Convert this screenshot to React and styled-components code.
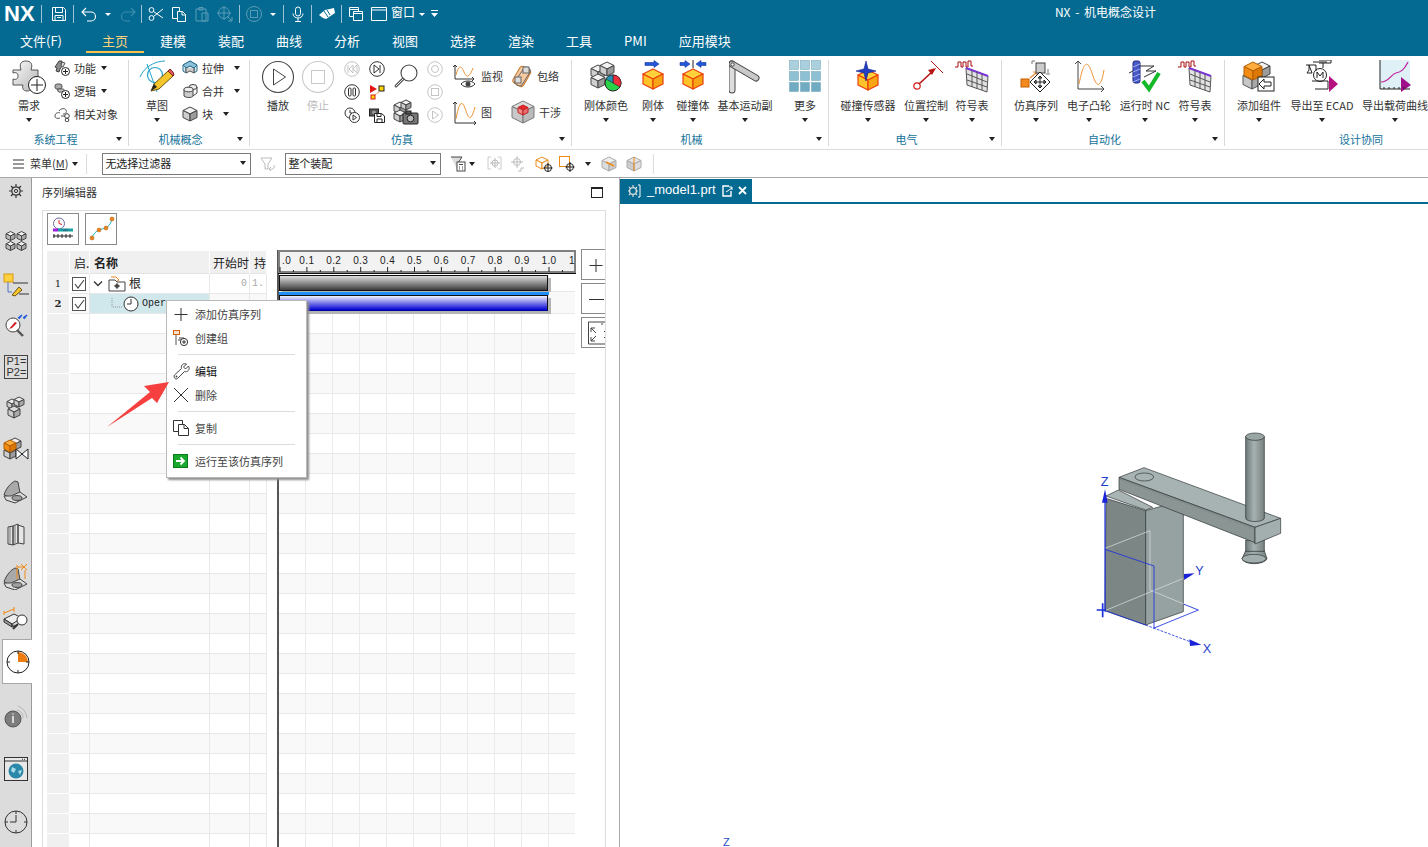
import React from 'react';
import styled, { createGlobalStyle } from 'styled-components';

const CN = `"Noto Sans CJK SC", "Liberation Sans", sans-serif`;

const GlobalStyle = createGlobalStyle`
  html, body { margin: 0; padding: 0; background: #fff; }
  body { font-family: ${CN}; font-size: 11px; color: #333; }
  * { box-sizing: border-box; }
  svg { display: block; flex: none; }
`;

const Page = styled.div`
  position: relative;
  width: 1428px;
  height: 847px;
  overflow: hidden;
  display: flex;
  flex-direction: column;
`;

/* ---------- header ---------- */
const Header = styled.div`
  height: 56px;
  flex: none;
  background: #046a92;
  color: #fff;
`;
const QuickBar = styled.div`
  height: 28px;
  display: flex;
  align-items: center;
  padding-left: 4px;
`;
const Logo = styled.span`
  font: bold 22px/28px "Liberation Sans", sans-serif;
  letter-spacing: 0;
  width: 32px;
`;
const QSep = styled.i`
  width: 1px;
  height: 18px;
  background: #9cc3d3;
  margin: 0 ${p => p.$r ?? 7}px 0 ${p => p.$l ?? 5}px;
`;
const QSlot = styled.span`
  display: flex;
  margin-left: ${p => p.$ml ?? 0}px;
`;
const QText = styled.span`
  font-size: 12px;
  line-height: 16px;
  margin: -4px 0 0 4px;
`;
const WhiteCaret = styled.i`
  width: 0;
  height: 0;
  border: 3px solid transparent;
  border-top: 3px solid #fff;
  border-bottom: 0;
  margin-left: ${p => p.$ml ?? 0}px;
`;
const AppTitle = styled.span`
  margin: -4px 272px 0 auto;
  font-size: 12px;
  line-height: 16px;
  word-spacing: 2px;
`;
const TabBar = styled.div`
  height: 28px;
  display: flex;
  padding-left: 4px;
`;
const MenuTab = styled.div`
  padding: 0 16px;
  height: 25px;
  line-height: 25px;
  font-size: 13px;
  color: ${p => (p.$on ? '#ffd27a' : '#fff')};
  border-bottom: ${p => (p.$on ? '2px solid #f7c14c' : '0')};
  margin-right: ${p => p.$mr ?? 0}px;
`;

/* ---------- ribbon ---------- */
const Ribbon = styled.div`
  height: 94px;
  flex: none;
  display: flex;
  padding-top: 4px;
  border-bottom: 1px solid #dcdcdc;
  background: #fff;
`;
const Group = styled.div`
  position: relative;
  flex: none;
  width: ${p => p.$w}px;
  height: 86px;
  display: flex;
  flex-direction: column;
  border-right: ${p => (p.$last ? '0' : '1px solid #d9d9d9')};
`;
const GroupBody = styled.div`
  height: 72px;
  display: flex;
  padding-left: ${p => p.$pl}px;
`;
const GroupFooter = styled.div`
  height: 14px;
  line-height: 14px;
  text-align: center;
  color: #14729a;
  padding-right: ${p => p.$pr ?? 17}px;
`;
const Caret = styled.i`
  display: block;
  width: 0;
  height: 0;
  border: 3.5px solid transparent;
  border-top: 4px solid #222;
  border-bottom: 0;
  margin-left: ${p => p.$ml ?? 0}px;
`;
const CornerCaret = styled(Caret)`
  position: absolute;
  right: 6px;
  bottom: 5px;
`;
const BigButton = styled.div`
  flex: none;
  width: ${p => p.$w}px;
  display: flex;
  flex-direction: column;
  align-items: center;
`;
const BigIcon = styled.div`
  height: 36px;
  display: flex;
  align-items: flex-start;
  justify-content: center;
`;
const BigLabel = styled.div`
  height: 16px;
  line-height: 16px;
  margin-top: 1px;
  white-space: nowrap;
  color: ${p => (p.$dim ? '#bbb' : '#333')};
`;
const BigCaret = styled(Caret)`
  margin-top: 5px;
`;
const ToolCol = styled.div`
  flex: none;
  display: flex;
  flex-direction: column;
  margin: ${p => p.$mt ?? -2}px 0 0 ${p => p.$ml ?? 0}px;
  width: ${p => (p.$w ? `${p.$w}px` : 'auto')};
`;
const SmallTool = styled.div`
  height: 23px;
  display: flex;
  align-items: center;
  justify-content: ${p => (p.$center ? 'center' : 'flex-start')};
  white-space: nowrap;
`;
const ToolText = styled.span`
  margin-left: 4px;
`;
const TallTool = styled.div`
  height: 36px;
  display: flex;
  align-items: center;
  justify-content: ${p => (p.$center ? 'center' : 'flex-start')};
  white-space: nowrap;
`;

/* ---------- selection bar ---------- */
const SelectionBar = styled.div`
  height: 28px;
  flex: none;
  display: flex;
  align-items: center;
  background: #fff;
  border-bottom: 1px solid #a9a9a9;
  padding-left: 13px;
`;
const SelSlot = styled.span`
  display: flex;
  margin-left: ${p => p.$ml ?? 0}px;
`;
const MenuLabel = styled.span`
  margin: -2px 0 0 6px;
  font-size: 11px;
  u { text-underline-offset: 1px; }
`;
const SelSep = styled.i`
  width: 1px;
  height: 20px;
  background: #ddd;
  margin-left: ${p => p.$ml}px;
`;
const Dropdown = styled.div`
  width: ${p => p.$w}px;
  height: 22px;
  margin-left: ${p => p.$ml}px;
  border: 1px solid #7a7a7a;
  display: flex;
  align-items: center;
  justify-content: space-between;
  padding: 0 4px 2px 2px;
  font-size: 11px;
  color: #222;
`;

/* ---------- main area ---------- */
const Main = styled.div`
  flex: 1;
  min-height: 0;
  display: flex;
`;
const Rail = styled.div`
  width: 32px;
  flex: none;
  background: #dcdcdc;
  border-right: 1px solid #9a9a9a;
  display: flex;
  flex-direction: column;
  align-items: stretch;
`;
const RailItem = styled.div`
  height: 26px;
  flex: none;
  margin-top: ${p => p.$mt}px;
  display: flex;
  align-items: center;
  justify-content: center;
`;
const RailActive = styled.div`
  height: 45px;
  flex: none;
  margin: ${p => p.$mt}px -1px 0 2px;
  background: #fff;
  border: 1px solid #a8a8a8;
  border-right: 0;
  display: flex;
  align-items: center;
  justify-content: center;
`;
const Panel = styled.div`
  width: 588px;
  flex: none;
  border-right: 1px solid #a9a9a9;
  padding-left: 10px;
  display: flex;
  flex-direction: column;
  background: #fff;
`;
const PanelHead = styled.div`
  height: 32px;
  flex: none;
  display: flex;
  align-items: center;
  justify-content: space-between;
  padding: 0 16px 4px 0;
  font-size: 11px;
  color: #333;
`;
const MaxBtn = styled.i`
  display: block;
  width: 12px;
  height: 11px;
  border: 1px solid #222;
  border-top-width: 2px;
`;
const PanelBox = styled.div`
  width: 564px;
  flex: 1;
  min-height: 0;
  border: 1px solid #dedede;
  border-bottom: 0;
  padding-left: 4px;
  overflow: hidden;
`;
const SeqTools = styled.div`
  height: 39px;
  display: flex;
  gap: 6px;
  padding-top: 2px;
`;
const SeqTool = styled.div`
  width: 32px;
  height: 32px;
  border: 1px solid #8a8a8a;
  display: flex;
  align-items: center;
  justify-content: center;
`;
const Sheet = styled.div`
  display: flex;
`;
const Table = styled.div`
  width: 220px;
  flex: none;
  margin-top: 1px;
`;
const HeadRow = styled.div`
  height: 23px;
  display: grid;
  grid-template-columns: 23px 20px 120px 40px 17px;
  background: #f0f0f0;
  border-bottom: 1px solid #e4e4e4;
`;
const HeadCell = styled.div`
  border-right: 1px solid #fff;
  line-height: 24px;
  font-size: 12px;
  padding-left: ${p => p.$pl ?? 3}px;
  font-weight: ${p => (p.$bold ? 700 : 400)};
  color: #222;
  white-space: nowrap;
`;
const Row = styled.div`
  height: 20px;
  display: grid;
  grid-template-columns: 23px 20px 120px 40px 17px;
  background: ${p => (p.$odd ? '#f9f9f9' : '#fff')};
`;
const NumCell = styled.div`
  background: #f0f0f0;
  border-right: 1px solid #fff;
  border-bottom: 1px solid #fff;
  text-align: center;
  font: ${p => (p.$bold ? 'bold' : 'normal')} 10px/19px "DejaVu Serif", serif;
  color: #222;
`;
const Cell = styled.div`
  border-right: 1px solid #e8e8e8;
  border-bottom: 1px solid #e8e8e8;
  display: flex;
  align-items: center;
  justify-content: ${p => (p.$end ? 'flex-end' : 'flex-start')};
  padding: 0 ${p => (p.$end ? 2 : 0)}px 0 0;
  color: #aaa;
  font: 10px "Liberation Mono", monospace;
  overflow: hidden;
  background: ${p => (p.$sel ? '#d0e7ec' : 'transparent')};
`;
const CheckBox = styled.span`
  display: flex;
  align-items: center;
  justify-content: center;
  width: 14px;
  height: 14px;
  margin-left: 2px;
  border: 1px solid #555;
  background: #fff;
`;
const TreeLabel = styled.span`
  font: ${p => (p.$mono ? '10px "Liberation Mono", monospace' : `12px ${CN}`)};
  color: #222;
  margin: ${p => (p.$mono ? 0 : -2)}px 0 0 3px;
  white-space: nowrap;
`;
const TreeIndent = styled.span`
  display: flex;
  align-items: center;
  margin-left: ${p => p.$ml}px;
`;
const Timeline = styled.div`
  width: 298px;
  flex: none;
  margin-left: 10px;
  border-left: 2px solid #555;
`;
const Ruler = styled.div`
  height: 24px;
  margin-left: -1px;
  width: 298px;
`;
const Lane = styled.div`
  height: ${p => p.$h ?? 20}px;
  width: 296px;
  background-color: ${p => (p.$odd ? '#f9f9f9' : '#fff')};
  background-image:
    linear-gradient(to top, #e8e8e8 1px, transparent 1px),
    repeating-linear-gradient(to right, transparent 0, transparent 26.2px, #ebebeb 26.2px, #ebebeb 27px);
  padding-top: ${p => p.$pt ?? 0}px;
`;
const Stripe = styled.div`
  width: 270px;
  height: 3px;
  background: #1e90f8;
`;
const Bar = styled.div`
  width: 269px;
  height: 16px;
  border: 1px solid #111;
  border-bottom-color: ${p => (p.$blue ? '#0000a0' : '#111')};
  background: ${p => (p.$blue
    ? 'linear-gradient(#f3f3ff, #0000d2)'
    : 'linear-gradient(#dedede, #3c3c3c)')};
  box-shadow: 3px 3px 0 #b4b4b4;
`;
const SideButtons = styled.div`
  margin-left: 6px;
  display: flex;
  flex-direction: column;
  gap: 3px;
  margin-top: -1px;
`;
const SideButton = styled.div`
  width: 32px;
  height: 31px;
  border: 1px solid #8a8a8a;
  display: flex;
  align-items: center;
  padding-left: 6px;
`;

/* ---------- viewport ---------- */
const Viewport = styled.div`
  position: relative;
  flex: 1;
  background: #fff;
  padding-top: 1px;
`;
const DocTabs = styled.div`
  height: 25px;
  border-bottom: 2px solid #046a92;
`;
const DocTab = styled.div`
  width: 132px;
  height: 23px;
  background: #046a92;
  color: #fff;
  display: flex;
  align-items: center;
  padding-left: 7px;
  font: 13px "Liberation Sans", sans-serif;
`;
const DocName = styled.span`
  margin: -2px 6px 0 6px;
`;
const ModelWrap = styled.div`
  position: absolute;
  left: 460px;
  top: 242px;
`;
const TriadZ = styled.span`
  position: absolute;
  left: 103px;
  bottom: -1px;
  font: 11px "Liberation Sans", sans-serif;
  color: #1d4fc4;
`;

/* ---------- context menu ---------- */
const ContextMenu = styled.div`
  position: absolute;
  left: 166px;
  top: 300px;
  width: 141px;
  height: 178px;
  background: #fff;
  border: 1px solid #b9b9b9;
  box-shadow: 2px 2px 2px #8f8f8f;
  padding: 1px 0 0 6px;
`;
const MenuItem = styled.div`
  height: 24px;
  display: flex;
  align-items: center;
  font-size: 11px;
  color: ${p => (p.$strong ? '#111' : '#444')};
`;
const MenuIcon = styled.span`
  width: 22px;
  display: flex;
  justify-content: flex-start;
`;
const MenuSep = styled.div`
  height: 1px;
  width: 117px;
  background: #dcdcdc;
  margin: 4px 0 4px 5px;
`;
const ArrowMark = styled.svg`
  position: absolute;
  left: 100px;
  top: 375px;
`;

/* ---------- drawings ---------- */
const Ic = ({ w = 16, h = 16, vb, children }) => (
  <svg width={w} height={h} viewBox={vb || `0 0 ${w} ${h}`} fill="none">{children}</svg>
);

const Cube = ({ x, y, s = 10, top = '#f2f2f2', left = '#cfcfcf', right = '#9c9c9c', stroke = '#444', sw = 1 }) => (
  <g stroke={stroke} strokeWidth={sw} strokeLinejoin="round">
    <polygon points={`${x},${y} ${x + s},${y - s / 2} ${x},${y - s} ${x - s},${y - s / 2}`} fill={top} />
    <polygon points={`${x},${y} ${x - s},${y - s / 2} ${x - s},${y + s / 2} ${x},${y + s}`} fill={left} />
    <polygon points={`${x},${y} ${x + s},${y - s / 2} ${x + s},${y + s / 2} ${x},${y + s}`} fill={right} />
  </g>
);
const OrangeCube = ({ x, y, s = 10 }) => (
  <Cube x={x} y={y} s={s} top="#ffd23c" left="#ffc22a" right="#f8a515" stroke="#e8400a" sw={1.2} />
);
const PlusBadge = ({ x, y, r = 5 }) => (
  <g>
    <circle cx={x} cy={y} r={r} fill="#fff" stroke="#222" />
    <path d={`M${x - r + 1.5} ${y}h${2 * r - 3}M${x} ${y - r + 1.5}v${2 * r - 3}`} stroke="#222" />
  </g>
);

const W = '#fff';
const QaSave = () => <Ic><path d="M1.5 1.5h11l2 2v11h-13z M4.5 1.5v5h7v-5 M4 14.5v-5h8v5 M6 11.5h4" stroke={W} /></Ic>;
const QaUndo = () => <Ic w={18}><path d="M6 2L2 6l4 4M2 6h9a4.5 4.5 0 0 1 0 9H7" stroke={W} strokeWidth="1.1" /></Ic>;
const QaRedo = () => <Ic w={18}><path d="M12 2l4 4-4 4M16 6H7a4.5 4.5 0 0 0 0 9h4" stroke="#3d8cab" strokeWidth="1.1" /></Ic>;
const QaCut = () => <Ic><circle cx="3.5" cy="4" r="2.4" stroke={W} /><circle cx="3.5" cy="12" r="2.4" stroke={W} /><path d="M5.5 5.5L15 12M5.5 10.5L15 3" stroke={W} /></Ic>;
const QaCopy = () => <Ic><path d="M1.5 1.5h7v11h-7z" stroke={W} fill="#046a92" /><path d="M6.5 5.5h5l3 3v7h-8z M11 5.5v3.5h3.5" stroke={W} fill="#046a92" /></Ic>;
const QaPaste = () => <Ic><path d="M2 3h10v12H2zM5 1.5h4V4H5z M8 7h6v8H8z" stroke="#5a9cb6" /></Ic>;
const QaMove = () => <Ic><circle cx="7" cy="7" r="5.5" stroke="#5a9cb6" /><path d="M7 0v14M0 7h14M10 10l5 5M15 11v4h-4" stroke="#5a9cb6" /></Ic>;
const QaStop = () => <Ic><circle cx="8" cy="8" r="7.5" stroke="#5a9cb6" /><rect x="4.5" y="4.5" width="7" height="7" stroke="#5a9cb6" /></Ic>;
const QaMic = () => <Ic w={14}><rect x="4.5" y="1" width="5" height="9" rx="2.5" stroke={W} /><path d="M2 7.5c0 6 10 6 10 0M7 12v3M4 15.5h6" stroke={W} /></Ic>;
const QaFlag = () => <Ic w={18}><path d="M1 9l6-5 9-2 1 5-9 6-3-1z" fill={W} /><path d="M6 5l4 6M9 4l3 5" stroke="#046a92" /></Ic>;
const QaWins = () => <Ic><path d="M1.5 1.5h9v9h-9z" stroke={W} /><path d="M5.5 5.5h9v9h-9z" stroke={W} fill="#046a92" /><path d="M1.5 3.5h9M5.5 7.5h9" stroke={W} /></Ic>;
const QaWin = () => <Ic><path d="M.5 1.5h15v13H.5zM.5 4h15" stroke={W} /></Ic>;
const QaTop = () => <Ic w={7} h={8}><path d="M0 .5h7" stroke={W} /><path d="M0 3h7L3.5 7z" fill={W} /></Ic>;

const IconPuzzle = () => (
  <Ic w={36} h={36}>
    <defs><linearGradient id="pz" x1="0" y1="0" x2="1" y2="1"><stop offset="0" stopColor="#fafafa" /><stop offset="1" stopColor="#b5b5b5" /></linearGradient></defs>
    <path d="M2 10h8c-2-6 0-9 5-9s7 3 5 9h7v7c-3-1-5 0-5 3s2 4 5 3v2H20c1 3 0 6-4 6s-5-3-4-6H2v-6c3 1 5 0 5-3s-2-4-5-3z" fill="url(#pz)" stroke="#555" />
    <circle cx="26" cy="25" r="8.5" fill="#fff" stroke="#222" />
    <path d="M20 25h12M26 19v12" stroke="#222" />
  </Ic>
);
const IconFunc = () => (
  <Ic><path d="M5 1l3 0-1 3 2 1-3 4-1 3-3-1 1-3-2-1z" fill="#8c8c8c" stroke="#444" /><path d="M8 2l3 1-2 4-2-1z" fill="#ddd" stroke="#555" /><PlusBadge x={11.5} y={11.5} r={4} /></Ic>
);
const IconLogic = () => (
  <Ic><rect x="1" y="1" width="7" height="5" rx="2" fill="#aaa" stroke="#555" /><path d="M3 6l2 3 2-1" stroke="#555" /><rect x="4" y="6" width="6" height="3" rx="1" fill="#ccc" stroke="#555" /><PlusBadge x={11.5} y={11.5} r={4} /></Ic>
);
const IconRelated = () => (
  <Ic><path d="M1 10c0-3 3-4 5-3M5 5c2-3 6-3 7-1s0 4-3 4M6 12c-3 1-5 0-5-2" stroke="#555" /><path d="M7 10h4" stroke="#555" /><circle cx="13" cy="10" r="2.3" stroke="#444" /><circle cx="13" cy="14" r="1.8" stroke="#444" /></Ic>
);
const IconSketch = () => (
  <Ic w={36} h={34}>
    <path d="M1 17C5 7 16 1 26 1M8 4l10 28" stroke="#23a3c9" />
    <circle cx="16" cy="15" r="7.5" stroke="#23a3c9" strokeWidth="1.2" />
    <path d="M12 31l3-7 14-13 5 5-14 13z" fill="#f4c62c" stroke="#6b5412" />
    <path d="M29 11l2-2 3 3 1 3-1 1z" fill="#e95a5a" stroke="#7a2222" />
    <path d="M12 31l3-7 3 3z" fill="#222" />
  </Ic>
);
const IconExtrude = () => (
  <Ic><path d="M1 5l7-4 7 4v6l-3 2V8L8 6 4 8v5l-3-2z" fill="#d6e6ee" stroke="#2b6f8b" /><path d="M1 5l7-4 7 4-3 3-4-2-4 2z" fill="#8cc3db" stroke="#2b6f8b" /><path d="M4 8v5l4-2 4 2V8" fill="#ccc" stroke="#555" /></Ic>
);
const IconMerge = () => (
  <Ic w={16} h={16}><ellipse cx="11" cy="4" rx="4" ry="2.5" fill="#eee" stroke="#444" /><path d="M7 4v4M15 4v6l-4 3" stroke="#444" /><path d="M2 6c2-2 8-2 9 0v7c-1 2-7 2-9 0z" fill="#ccc" stroke="#444" /><ellipse cx="6.5" cy="6.5" rx="4.5" ry="2.3" fill="#eee" stroke="#444" /></Ic>
);
const IconBlock = () => <Ic><Cube x={8} y={8} s={7} /></Ic>;
const IconPlay = () => <Ic w={34} h={34}><circle cx="17" cy="17" r="15.5" stroke="#444" strokeWidth="1.1" /><path d="M12.5 9l12 8-12 8z" stroke="#444" /></Ic>;
const IconStop = () => <Ic w={34} h={34}><circle cx="17" cy="17" r="15.5" stroke="#c9c9c9" strokeWidth="1.1" /><rect x="10.5" y="10.5" width="13" height="13" stroke="#c9c9c9" /></Ic>;
const Round = ({ c = '#333', children }) => <Ic><circle cx="8" cy="8" r="7.3" stroke={c} fill="#fff" />{children}</Ic>;
const IconRewind = () => <Round c="#c4c4c4"><path d="M4 4v8M9 4L5 8l4 4zM13 4L9 8l4 4z" stroke="#c4c4c4" /></Round>;
const IconPause = () => <Round><rect x="4.5" y="4" width="2.5" height="8" rx="1" stroke="#333" /><rect x="9" y="4" width="2.5" height="8" rx="1" stroke="#333" /></Round>;
const IconStep = () => <Round><path d="M5 4l5 4-5 4zM11 4v8" stroke="#333" /></Round>;
const IconClocks = () => (
  <Ic><circle cx="6" cy="6" r="5" fill="#fff" stroke="#333" /><path d="M6 3v3h2" stroke="#333" /><circle cx="10.5" cy="10.5" r="5" fill="#fff" stroke="#333" /><path d="M9 8l3.5 2.5L9 13z" stroke="#333" /></Ic>
);
const IconSnap = () => (
  <Ic><path d="M1 1l7 4-7 4z" fill="#e01616" /><rect x="10" y="2" width="5" height="5" fill="#ffd500" stroke="#222" /><rect x="2" y="11" width="4" height="4" fill="#ffd500" stroke="#d51d1d" /><path d="M6 11l5-4" stroke="#e8782a" strokeDasharray="2 1" /></Ic>
);
const IconSaveCam = () => (
  <Ic><rect x="0.5" y="2" width="9" height="7" fill="#555" stroke="#222" /><circle cx="5" cy="5.5" r="2" fill="#999" /><path d="M5.5 6.5h7l3 2.5v6.5h-10z" fill="#fff" stroke="#222" /><path d="M8 6.5v3h4v-3M8 15v-3h5v3" stroke="#222" /></Ic>
);
const IconSearch = () => (
  <Ic w={26} h={26}><circle cx="16" cy="10" r="8" stroke="#444" strokeWidth="1.1" /><path d="M10 16l-7 7" stroke="#555" strokeWidth="3" strokeLinecap="round" /><path d="M10 16l-7 7" stroke="#eee" strokeLinecap="round" /></Ic>
);
const IconCamBoxes = () => (
  <Ic w={26} h={26}><Cube x={7} y={9} s={6} /><Cube x={7} y={17} s={6} /><Cube x={13} y={6} s={5} /><rect x="10" y="14" width="15" height="11" rx="1" fill="#777" stroke="#222" /><rect x="13" y="12" width="5" height="3" fill="#555" stroke="#222" /><circle cx="17.5" cy="19.5" r="3.4" fill="#bbb" stroke="#222" /></Ic>
);
const IconCircleDot = () => <Round c="#c4c4c4"><circle cx="8" cy="8" r="3.5" stroke="#c4c4c4" /></Round>;
const IconCircleBox = () => <Round c="#c4c4c4"><rect x="4.5" y="4.5" width="7" height="7" stroke="#c4c4c4" /></Round>;
const IconCirclePlay = () => <Round c="#c4c4c4"><path d="M5.5 4l6 4-6 4z" stroke="#c4c4c4" /></Round>;
const Axes = ({ y = 24, h = 24 }) => (
  <path d={`M3 ${y - h + 1}V${y}H24M1 ${y - h + 3}l2-2 2 2M22 ${y - 2}l2 2-2 2`} stroke="#333" />
);
const IconMonitor = () => (
  <Ic w={25} h={24}><path d="M3 1v14h19M1 3l2-2 2 2M20 13l2 2-2 2" stroke="#333" /><path d="M4 11c3-12 6-8 8-3s5 7 9-4" stroke="#ee9130" /><path d="M9 20c3-4 11-4 14 0-3 4-11 4-14 0z" fill="#fff" stroke="#333" /><circle cx="16" cy="20" r="2.5" fill="#444" /></Ic>
);
const IconGraph = () => <Ic w={25} h={25}><Axes y={23} h={22} /><path d="M4 19c4-22 7-17 10-8s5 10 9-4" stroke="#ee9130" /></Ic>;
const IconEnvelope = () => (
  <Ic w={22} h={24}><rect x="5" y="3" width="12" height="19" rx="3" transform="rotate(30 11 12)" fill="#f7c9a0" stroke="#c8752c" /><path d="M14 3c3 0 6 1 5 5l-8 13c-3 2-8 0-7-4z" stroke="#666" /><rect x="4" y="13" width="6" height="6" fill="#ddd" stroke="#666" /><rect x="12" y="3" width="6" height="6" fill="#ddd" stroke="#666" /></Ic>
);
const IconInterfere = () => (
  <Ic w={24} h={24}><Cube x={12} y={12} s={11} top="#ddd" left="#c8c8c8" right="#bbb" stroke="#777" /><Cube x={12} y={10} s={5} top="#e8262c" left="#ee8c8c" right="#e56e6e" stroke="#c02020" /></Ic>
);
const IconRigidColor = () => (
  <Ic w={34} h={32}>
    <Cube x={9} y={12} s={7} /><Cube x={9} y={21} s={7} /><Cube x={18} y={9} s={7} />
    <circle cx="24" cy="23" r="8" fill="#2ad24a" stroke="#222" />
    <path d="M24 23V15a8 8 0 0 1 7 12z" fill="#ee2f3f" stroke="#222" strokeWidth=".6" />
    <path d="M24 23l-7-4a8 8 0 0 1 7-4z" fill="#2490b4" stroke="#222" strokeWidth=".6" />
  </Ic>
);
const BlueArrow = ({ x, y, l = 14, dir = 1 }) => (
  <g fill="#2158d8" stroke="#1236a0" strokeWidth=".6">
    <path d={dir > 0
      ? `M${x} ${y - 1.5}h${l - 4}v-2l5 3.5-5 3.5v-2h-${l - 4}z`
      : `M${x} ${y - 1.5}h-${l - 4}v-2l-5 3.5 5 3.5v-2h${l - 4}z`} />
  </g>
);
const IconRigid = () => <Ic w={24} h={34}><BlueArrow x={4} y={4} l={13} /><OrangeCube x={12} y={19} s={10} /></Ic>;
const IconCollide = () => (
  <Ic w={28} h={34}><BlueArrow x={1} y={4} l={9} /><BlueArrow x={27} y={4} l={9} dir={-1} /><path d="M14 0v8" stroke="#222" /><OrangeCube x={14} y={19} s={10} /></Ic>
);
const IconJoint = () => (
  <Ic w={32} h={34}>
    <path d="M3 4v26" stroke="#444" strokeWidth="7" strokeLinecap="round" />
    <path d="M3 4v26" stroke="#ddd" strokeWidth="5" strokeLinecap="round" />
    <path d="M3 4l24 14" stroke="#444" strokeWidth="7" strokeLinecap="round" />
    <path d="M3 4l24 14" stroke="#c9c9c9" strokeWidth="5" strokeLinecap="round" />
    <circle cx="3.5" cy="4.5" r="1.7" fill="#eee" stroke="#444" />
  </Ic>
);
const IconMore = () => (
  <Ic w={32} h={32}>
    {[0, 11, 22].map(y => [0, 11, 22].map(x => (
      <rect key={`${x}-${y}`} x={x + .5} y={y + .5} width={9} height={9} fill={y === 0 ? '#a9d0dc' : y === 11 ? '#8cc0d2' : '#71abc2'} stroke="#6aa2b8" strokeWidth=".5" />
    )))}
  </Ic>
);
const IconSensor = () => (
  <Ic w={26} h={34}><OrangeCube x={13} y={20} s={10} /><path d="M11 1l2 8 8 2-8 2-2 8-2-8-8-2 8-2z" fill="#1f3fc4" stroke="#10208a" strokeWidth=".6" /></Ic>
);
const IconPosition = () => (
  <Ic w={34} h={34}><circle cx="8" cy="26" r="3.2" stroke="#d11919" strokeWidth="1.2" /><path d="M10 24L24 11" stroke="#b81414" strokeWidth="1.6" /><path d="M27 8l-8 2 4 5z" fill="#b81414" /><path d="M22 1l12 12" stroke="#b81414" /></Ic>
);
const IconSymbols = () => (
  <Ic w={34} h={34}>
    <path d="M0 7h3V2h3v5h2V2h3v5h2V1h3v5h2" stroke="#a80d0d" strokeWidth="1" />
    <path d="M11 8l22 8-1 16-20-7z" fill="#e2e2e2" stroke="#555" />
    <path d="M11 8l22 8" stroke="#7a35d6" strokeWidth="2" />
    <path d="M12 14l20 8M12 20l20 7M17 10v17M22 12v17M27 14v16" stroke="#555" />
  </Ic>
);
const IconSimSeq = () => (
  <Ic w={32} h={34}>
    <rect x="1" y="19" width="8" height="8" fill="#f28a1f" stroke="#c45e00" />
    <path d="M10 18l6-5M13 12h4v4" stroke="#ef8a2e" strokeWidth="1.2" />
    <rect x="16" y="3" width="9" height="10" fill="#ccc" stroke="#444" />
    <path d="M12 1h3M12 1v3M26 14l4 0M28 9v4" stroke="#777" />
    <path d="M20 12l10 10-10 10-10-10z" fill="#fff" stroke="#222" />
    <path d="M20 16v12M14 22h12M20 16l-2 2h4zM20 28l-2-2h4zM14 22l2-2v4zM26 22l-2-2v4z" stroke="#222" />
  </Ic>
);
const IconCam = () => (
  <Ic w={32} h={32}><path d="M5 1v28h26M2 4l3-3 3 3M28 26l3 3-3 3" stroke="#444" /><path d="M6 24c6-30 10-20 14-8s8 12 11-6" stroke="#ee9130" /></Ic>
);
const IconRunNc = () => (
  <Ic w={32} h={34}>
    <rect x="4" y="1" width="7" height="22" rx="2" fill="#4a58c8" stroke="#1e2a80" />
    <path d="M4 7l7-3M4 12l7-3M4 17l7-3M4 22l7-3" stroke="#9fb0f0" />
    <path d="M11 6h14l-8 5h10L15 17M0 13l4-2" stroke="#333" />
    <path d="M14 21l6 8L30 13" stroke="#14b828" strokeWidth="4" strokeLinejoin="miter" />
  </Ic>
);
const IconAddComp = () => (
  <Ic w={34} h={32}>
    <Cube x={20} y={10} s={8} /><Cube x={10} y={20} s={9} top="#d9d9d9" left="#c7c7c7" right="#a8a8a8" stroke="#555" />
    <Cube x={11} y={11} s={9} top="#ffad3c" left="#f28c14" right="#dd7708" stroke="#b35f00" />
    <rect x="16" y="17" width="16" height="14" fill="#fff" stroke="#222" />
    <path d="M29 22h-7v-3l-5 5 5 5v-3h7z" fill="#fff" stroke="#222" />
  </Ic>
);
const IconEcad = () => (
  <Ic w={34} h={32}>
    <path d="M8 2h14M14 0h12v3H14M1 5h10v6M4 5v5l-2 3h5zM18 3v5" stroke="#222" />
    <circle cx="15" cy="15" r="6.5" stroke="#222" /><path d="M12 18v-6l3 4 3-4v6" stroke="#222" />
    <path d="M7 21h16v8H10" stroke="#222" />
    <path d="M24 16l9 8-9 8z" fill="#b4107e" />
  </Ic>
);
const IconLoad = () => (
  <Ic w={32} h={32}>
    <rect width="30" height="29" x="1" fill="#dff0f7" />
    <path d="M1 0v29h30" stroke="#222" />
    <path d="M2 22c8 0 10-8 15-9s8-3 12-11" stroke="#c01d9a" strokeWidth="1.2" />
    <path d="M22 17l10 8-10 7z" fill="#a00f8a" />
    <path d="M5 27v2M10 27v2M15 27v2M20 27v2M25 27v2" stroke="#222" />
  </Ic>
);

const SelFilter = ({ c = '#bbb' }) => <Ic><path d="M1 2h11L8 8v5H5V8z" stroke={c} /><path d="M9 13c4 1 6-1 5-4M9 13l2-2M9 13l2 2" stroke={c} /></Ic>;
const SelAsm = () => <Ic><path d="M1 1h11L8 7v8" stroke="#444" fill="#ddd" /><rect x="7" y="6" width="8" height="9" fill="#fff" stroke="#444" /><path d="M9 8.5h4M9 11h1M12 11h1M9 13h1M12 13h1" stroke="#444" /></Ic>;
const SelTarget = () => <Ic><path d="M4 1H1v12h3M11 1h3v12h-3" stroke="#ccc" /><circle cx="8" cy="7" r="3" stroke="#bbb" /><path d="M8 2v10M3 7h10" stroke="#bbb" /></Ic>;
const SelPoint = () => <Ic><circle cx="7" cy="6" r="3.5" stroke="#bbb" /><path d="M7 0v12M1 6h12M8 15h3v-3h3" stroke="#bbb" /></Ic>;
const SelCubeT = () => (
  <Ic w={18}><Cube x={7} y={7} s={6} top="#fff" left="#fff" right="#fff" stroke="#ef8a17" /><circle cx="13" cy="12" r="3.5" stroke="#222" /><path d="M13 7v10M8.5 12h9" stroke="#222" /></Ic>
);
const SelSquareT = () => (
  <Ic w={18}><rect x=".5" y=".5" width="10" height="10" stroke="#ef8a17" /><circle cx="11" cy="11" r="3.5" stroke="#222" /><path d="M11 6v10M6.5 11h9" stroke="#222" /></Ic>
);
const SelBoxLine = () => <Ic w={17}><Cube x={8} y={8} s={7} top="#eee" left="#ddd" right="#ccc" stroke="#aaa" /><path d="M5 6l8 4" stroke="#ef8a17" strokeWidth="1.4" /></Ic>;
const SelBoxFrame = () => <Ic><Cube x={8} y={8} s={7} top="#e5e5e5" left="#ccc" right="#ddd" stroke="#aaa" /><path d="M8 1v14" stroke="#ef8a17" /></Ic>;

const Rg = ({ children, w = 24, h = 26 }) => <Ic w={w} h={h}>{children}</Ic>;
const RailGear = () => (
  <Ic w={14} h={14}><circle cx="7" cy="7" r="4.2" stroke="#333" strokeWidth="1.3" /><circle cx="7" cy="7" r="1.6" stroke="#333" /><path d="M7 0v2.5M7 11.5V14M0 7h2.5M11.5 7H14M2 2l2 2M10 10l2 2M12 2l-2 2M4 10l-2 2" stroke="#333" strokeWidth="1.2" /></Ic>
);
const RailCubes = () => <Rg w={22} h={20}><Cube x={5.5} y={5} s={4.5} top="#eee" left="#bbb" right="#aaa" /><Cube x={16.5} y={5} s={4.5} top="#eee" left="#bbb" right="#aaa" /><Cube x={5.5} y={15} s={4.5} top="#eee" left="#bbb" right="#aaa" /><Cube x={16.5} y={15} s={4.5} top="#eee" left="#bbb" right="#aaa" /></Rg>;
const RailTree = () => (
  <Rg w={26} h={24}><rect x="1" y="1" width="9" height="8" fill="#ffd040" stroke="#d89a10" /><path d="M5 9v10h4" stroke="#5275c0" /><path d="M10 10h15M16 21h10" stroke="#333" /><path d="M9 22l7-8 3 3-7 6z" fill="#f4c62c" stroke="#6b5412" /></Rg>
);
const RailCompass = () => (
  <Rg w={26} h={26}><circle cx="10" cy="13" r="7" fill="#fff" stroke="#444" /><path d="M6 17l6-7 2 1-5 5z" fill="#d11919" /><path d="M14 18l6 6" stroke="#555" strokeWidth="2.4" /><path d="M15 6l4-3-3 4M20 6l4-3-3 4" stroke="#2158d8" strokeWidth="1.2" /></Rg>
);
const RailCompare = styled.span`
  display: block;
  width: 24px;
  height: 24px;
  border: 1px solid #444;
  font: 11px/10.5px "Liberation Sans", sans-serif;
  padding: 0 0 0 2px;
  color: #333;
`;
const RailFaces = () => <Rg w={20} h={24}><Cube x={6} y={8} s={5} top="#eee" left="#ccc" right="#aaa" /><Cube x={13} y={6} s={5} top="#eee" left="#ccc" right="#aaa" /><Cube x={8} y={16} s={6} top="#ddd" left="#ccc" right="#aaa" /></Rg>;
const RailValve = () => (
  <Rg w={26} h={26}><Cube x={12} y={7} s={6} /><Cube x={7} y={16} s={6} top="#ddd" /><Cube x={7} y={9} s={6} top="#ffad3c" left="#f28c14" right="#dd7708" stroke="#b35f00" /><path d="M13 12l12 10V12L13 22z" fill="#fff" stroke="#222" /></Rg>
);
const Bracket = ({ dx = 0, dy = 0 }) => (
  <g transform={`translate(${dx} ${dy})`}>
    <path d="M1 15C3 8 8 3 12 1l3 1 2 11-9 5z" fill="#a9a9a9" stroke="#444" />
    <path d="M1 16l7 0 9-4 7 5-12 6-9-3z" fill="#dcdcdc" stroke="#444" />
    <ellipse cx="14" cy="18" rx="5" ry="2.4" fill="#a0a0a0" stroke="#444" />
  </g>
);
const RailBracket = () => <Rg w={26} h={24}><Bracket /></Rg>;
const RailBooks = () => (
  <Rg w={18} h={24}>
    <path d="M1 4l5-1v19l-5-1z M6 3l5-2v19l-5 2z M11 2l6 2v17l-6-1z" fill="#e6e6e6" stroke="#444" />
    <path d="M3 4v17M8 3v18" stroke="#777" />
  </Rg>
);
const RailBracketDim = () => <Rg w={26} h={26}><Bracket dy={3} /><path d="M14 1v14M22 6v9M14 3h8M18 0l6 6M24 0l-6 6" stroke="#ef8a17" /></Rg>;
const RailPartDim = () => (
  <Rg w={26} h={26}><path d="M1 13l10-5 8 4-10 6z" fill="#eee" stroke="#333" /><path d="M1 13v3l8 5v-3zM9 18v3l5-2" fill="#999" stroke="#333" /><path d="M1 9v-4M1 7l10-4M11 1v5" stroke="#ef8a17" /><circle cx="19" cy="14" r="5" fill="#fff" stroke="#333" /><path d="M15 18l-5 5" stroke="#333" strokeWidth="2" /></Rg>
);
const RailClockPie = () => (
  <Ic w={24} h={24}><circle cx="12" cy="12" r="11" fill="#fff" stroke="#222" /><path d="M12 2a10 10 0 0 1 10 10H12z" fill="#ee7d11" /><path d="M12 1v3M12 20v3M1 12h3M20 12h3" stroke="#222" /></Ic>
);
const RailInfo = () => (
  <Ic w={24} h={26}><path d="M14 2c5 2 8 6 9 12M13 6c4 1 6 4 6 8" stroke="#b5b5b5" /><circle cx="9" cy="15" r="8" fill="#7d7d7d" stroke="#555" /><path d="M9 12v7M9 9.5v1" stroke="#fff" strokeWidth="1.4" /></Ic>
);
const RailWeb = () => (
  <Ic w={24} h={24}><rect x=".5" y=".5" width="23" height="23" fill="#e8e8e8" stroke="#333" /><path d="M.5 4h23M18 2.3h1M20 2.3h1" stroke="#333" /><circle cx="12" cy="14" r="7.5" fill="#2b88a8" /><path d="M8 10l4 2-2 4-3-2zM14 14l4-1-2 5z" fill="#a9dbe8" /></Ic>
);
const RailClock = () => <Ic w={24} h={24}><circle cx="12" cy="12" r="11" stroke="#333" /><path d="M12 5v7H6M12 1v3M12 20v3M1 12h3M20 12h3" stroke="#333" /></Ic>;

const SeqClock = () => (
  <Ic w={24} h={24}><circle cx="8" cy="6.5" r="5.5" fill="#fff" stroke="#6a6aa0" /><path d="M8 3v3.5l3 1" stroke="#d22" /><path d="M2 13h5" stroke="#a020e0" strokeWidth="3" /><path d="M7 13h5" stroke="#18a0a0" strokeWidth="3" /><path d="M12 13h5" stroke="#208090" strokeWidth="3" /><path d="M17 13h5" stroke="#18a0a0" strokeWidth="3" /><path d="M2 19h20M3 17v4M7 17v4M11 17v4M15 17v4M19 17v4" stroke="#222" /></Ic>
);
const SeqCurve = () => (
  <Ic w={28} h={28}><path d="M5 23c2-6 6-8 10-9s8-2 10-10" stroke="#16b0d0" /><g fill="#ee8320" stroke="#b35f00" strokeWidth=".5"><circle cx="5" cy="23" r="2" /><circle cx="12" cy="15" r="2" /><circle cx="19" cy="13" r="2" /><circle cx="25" cy="4" r="2" /></g></Ic>
);
const CheckMark = () => <Ic w={12} h={12}><path d="M2 6l3 4 6-8" stroke="#444" strokeWidth="1.1" /></Ic>;
const Chevron = () => <Ic w={10} h={8}><path d="M1 1.5l4 4 4-4" stroke="#333" strokeWidth="1.3" /></Ic>;
const TreeRoot = () => (
  <Ic w={18} h={16}><path d="M3 1h5M8 1l3 3-3 2" stroke="#ee8320" /><path d="M1 6V4h6l2 2h8v9H1z" fill="#fff" stroke="#444" /><circle cx="9" cy="10" r="2" fill="#444" /><path d="M9 7v6M6 10h6" stroke="#444" /></Ic>
);
const TreeClock = () => <Ic w={16} h={16}><circle cx="8" cy="8" r="7" fill="#fff" stroke="#333" /><path d="M8 3v5H4" stroke="#333" /></Ic>;
const TreeLine = () => <Ic w={12} h={12}><path d="M1 0v9h10" stroke="#999" strokeDasharray="1 1" /></Ic>;
const MPlus = () => <Ic><path d="M8 2v13M1.5 8.5h13" stroke="#333" /></Ic>;
const MGroup = () => <Ic><rect x=".5" y=".5" width="6" height="4" fill="#f4e0cc" stroke="#d5620e" /><path d="M3 5v10" stroke="#555" /><path d="M6 8h5v2M5 10h6" stroke="#444" /><circle cx="11" cy="12" r="3.6" fill="#fff" stroke="#333" /><path d="M9 12h4M11 10v4" stroke="#333" /></Ic>;
const MWrench = () => (
  <Ic w={17} h={17}><path d="M15.5 3L12.5 6l-2-2 3-3c-3-1-6 1-5 4.5L1.5 12c-1 1 0 3 .5 3.5s2 1 3-.5l6.5-6.5c3 1 6-2 4-5.5z" stroke="#444" fill="#fff" /><circle cx="3.5" cy="13.5" r=".9" fill="#444" /></Ic>
);
const MCross = () => <Ic><path d="M1 1l14 14M15 1L1 15" stroke="#333" /></Ic>;
const MCopy = () => <Ic w={16} h={16}><path d="M.5.5h9v11h-9z" stroke="#333" /><path d="M5.5 4.5h6l4 4v7h-10z M11 4.5v4h4.5" fill="#fff" stroke="#333" /></Ic>;
const MRun = () => <Ic w={15} h={14}><rect width="15" height="14" fill="#1aa82e" /><rect x=".5" y=".5" width="14" height="13" fill="none" stroke="#0b7a1c" /><path d="M3 7h8M7.5 3.5L11 7l-3.5 3.5" stroke="#fff" strokeWidth="1.8" /></Ic>;

const Tab2Gear = () => (
  <Ic w={14} h={14}><circle cx="6" cy="7" r="3.4" stroke="#ddd" strokeWidth="1.4" /><path d="M6 1v2M6 11v2M1 7h1M10 7h1M2 3l1 1M9 10l1 1M10 3L9 4M3 10l-1 1" stroke="#ddd" strokeWidth="1.2" /><path d="M11 1h2v12h-2" stroke="#fff" /></Ic>
);
const TabPop = () => <Ic w={11} h={12}><path d="M7 1H1v10h8V6" stroke="#fff" strokeWidth="1.4" /><path d="M4 7l6-4M7 2h3v3" stroke="#fff" /></Ic>;
const TabClose = () => <Ic w={9} h={9}><path d="M1 1l7 7M8 1L1 8" stroke="#fff" strokeWidth="1.8" /></Ic>;

const SideFit = () => (
  <Ic w={24} h={24}><path d="M.5 1h30M.5 1v22h30M13 3h2M17 3h1" stroke="#444" /><path d="M3 7l5 5M3 7h4M3 7v4M3 20l5-5M3 20h4M3 20v-4M20 7l-4 4M20 7h-3M20 7v3M20 20l-4-4" stroke="#444" /></Ic>
);

const Model = () => (
  <svg width="220" height="240" viewBox="0 0 660 720" fill="none">
    <defs>
      <linearGradient id="col" x1="0" x2="1" y1="0" y2="0">
        <stop offset="0" stopColor="#6d7979" /><stop offset=".45" stopColor="#a6b2b1" /><stop offset="1" stopColor="#76817f" />
      </linearGradient>
    </defs>
    <g stroke="#2a3030" strokeWidth="2" strokeLinejoin="round">
      <path d="M486 416l11-24h56l8 24c-8 20-70 20-75 0z" fill="url(#col)" />
      <ellipse cx="522" cy="416" rx="36" ry="13" fill="#a2aead" />
      <rect x="497" y="360" width="56" height="34" fill="url(#col)" />
      <polygon points="78,235 197,272 197,615 75,572" fill="#7b8685" />
      <polygon points="197,272 310,240 310,575 197,615" fill="#96a2a1" />
      <polygon points="78,228 115,210 218,262 197,270" fill="#a9b5b4" />
      <polygon points="117,172 192,143 602,295 525,322" fill="#a7b3b2" />
      <polygon points="117,172 525,322 525,368 117,208" fill="#8a9594" />
      <polygon points="525,322 602,295 602,340 525,372" fill="#a3afae" />
      <path d="M120 178L525 327" stroke="#4c5554" strokeWidth="1" strokeDasharray="3 3" />
      <ellipse cx="193" cy="171" rx="28" ry="12" fill="#a7b3b2" />
      <path d="M497 50V294c0 14 56 14 56 0V50z" fill="url(#col)" />
      <ellipse cx="525" cy="50" rx="28" ry="11" fill="#9aa6a5" />
    </g>
    <g stroke="#d7dcdc" strokeWidth="2.5" opacity=".9">
      <path d="M75 385L210 332V510M75 572L310 475M210 510L355 570" />
    </g>
    <g stroke="#1a2fe0" strokeWidth="2.5">
      <path d="M75 575V230" strokeWidth="3.5" />
      <path d="M75 388L222 438V625M220 625L355 570L310 552M75 572L197 615" />
      <path d="M197 615L330 665" strokeDasharray="8 4" />
      <path d="M50 570H78M68 550V592" strokeWidth="5" />
    </g>
    <g fill="#1a22d8">
      <path d="M75 208l8 40H66z" />
      <path d="M312 462l32-2-32 20z" />
      <path d="M328 658l36 16-34 4z" />
    </g>
    <g fill="#1c3dcc" fontFamily="Liberation Sans, sans-serif" fontSize="38">
      <text x="62" y="198">Z</text>
      <text x="346" y="466">Y</text>
      <text x="368" y="699">X</text>
    </g>
  </svg>
);

const RulerDrawing = () => {
  const labels = ['.0', '0.1', '0.2', '0.3', '0.4', '0.5', '0.6', '0.7', '0.8', '0.9', '1.0', '1'];
  const step = 26.9;
  return (
    <svg width="298" height="24" viewBox="0 0 298 24">
      <rect x="1" y="1" width="296" height="21" fill="#f2f2f2" stroke="#808080" strokeWidth="2" />
      <path d="M0 23.5h298" stroke="#111" />
      {labels.map((t, i) => (
        <text key={t} x={i === 0 ? 4 : i === 11 ? 294 : i * step + 2} y="14" textAnchor={i === 0 ? 'start' : 'middle'} fontFamily="Liberation Sans, sans-serif" fontSize="10" fill="#222" letterSpacing=".4">{t}</text>
      ))}
      {Array.from({ length: 22 }, (_, i) => {
        const x = 2 + i * step / 2;
        return <path key={i} d={`M${x} ${i % 2 ? 20 : 17}V22`} stroke="#222" />;
      })}
    </svg>
  );
};

const ribbonGroup4 = [
  { w: 44, label: '刚体颜色', icon: <IconRigidColor /> },
  { w: 50, label: '刚体', icon: <IconRigid /> },
  { w: 30, label: '碰撞体', icon: <IconCollide /> },
  { w: 74, label: '基本运动副', icon: <IconJoint /> },
  { w: 46, label: '更多', icon: <IconMore /> },
];
const ribbonGroup5 = [
  { w: 58, label: '碰撞传感器', icon: <IconSensor /> },
  { w: 58, label: '位置控制', icon: <IconPosition /> },
  { w: 34, label: '符号表', icon: <IconSymbols /> },
];
const ribbonGroup6 = [
  { w: 52, label: '仿真序列', icon: <IconSimSeq /> },
  { w: 54, label: '电子凸轮', icon: <IconCam /> },
  { w: 58, label: '运行时 NC', icon: <IconRunNc /> },
  { w: 42, label: '符号表', icon: <IconSymbols /> },
];
const ribbonGroup7 = [
  { w: 52, label: '添加组件', icon: <IconAddComp /> },
  { w: 74, label: '导出至 ECAD', icon: <IconEcad /> },
  { w: 72, label: '导出载荷曲线', icon: <IconLoad /> },
];

const Big = ({ w, label, icon, dim, noCaret }) => (
  <BigButton $w={w}>
    <BigIcon>{icon}</BigIcon>
    <BigLabel $dim={dim}>{label}</BigLabel>
    {!noCaret && <BigCaret />}
  </BigButton>
);

const tabs = ['建模', '装配', '曲线', '分析', '视图', '选择', '渲染', '工具', 'PMI', '应用模块'];
const rows = Array.from({ length: 29 }, (_, i) => i);

function App() {
  return (
    <Page>
      <GlobalStyle />
      <Header>
        <QuickBar>
          <Logo>NX</Logo>
          <QSep $l={5} $r={9} />
          <QaSave />
          <QSep $l={6} $r={6} />
          <QaUndo />
          <WhiteCaret $ml={7} />
          <QSlot $ml={8}><QaRedo /></QSlot>
          <QSep $l={4} $r={6} />
          <QaCut />
          <QSlot $ml={7}><QaCopy /></QSlot>
          <QSlot $ml={7}><QaPaste /></QSlot>
          <QSlot $ml={7}><QaMove /></QSlot>
          <QSep $l={6} $r={6} />
          <QaStop />
          <WhiteCaret $ml={8} />
          <QSep $l={7} $r={7} />
          <QaMic />
          <QSep $l={6} $r={6} />
          <QaFlag />
          <QSep $l={5} $r={6} />
          <QaWins />
          <QSlot $ml={7}><QaWin /></QSlot>
          <QText>窗口</QText>
          <WhiteCaret $ml={4} />
          <QSlot $ml={6}><QaTop /></QSlot>
          <AppTitle>NX - 机电概念设计</AppTitle>
        </QuickBar>
        <TabBar>
          <MenuTab $mr={8}>文件(F)</MenuTab>
          <MenuTab $on>主页</MenuTab>
          {tabs.map(t => <MenuTab key={t}>{t}</MenuTab>)}
        </TabBar>
      </Header>

      <Ribbon>
        <Group $w={129}>
          <GroupBody $pl={6}>
            <Big w={46} label="需求" icon={<IconPuzzle />} />
            <ToolCol $ml={2} $mt={-4}>
              <SmallTool><IconFunc /><ToolText>功能</ToolText><Caret $ml={5} /></SmallTool>
              <SmallTool><IconLogic /><ToolText>逻辑</ToolText><Caret $ml={5} /></SmallTool>
              <SmallTool><IconRelated /><ToolText>相关对象</ToolText></SmallTool>
            </ToolCol>
          </GroupBody>
          <GroupFooter>系统工程</GroupFooter>
          <CornerCaret />
        </Group>
        <Group $w={121}>
          <GroupBody $pl={6}>
            <Big w={44} label="草图" icon={<IconSketch />} />
            <ToolCol $ml={3} $mt={-4}>
              <SmallTool><IconExtrude /><ToolText>拉伸</ToolText><Caret $ml={10} /></SmallTool>
              <SmallTool><IconMerge /><ToolText>合并</ToolText><Caret $ml={10} /></SmallTool>
              <SmallTool><IconBlock /><ToolText>块</ToolText><Caret $ml={10} /></SmallTool>
            </ToolCol>
          </GroupBody>
          <GroupFooter>机械概念</GroupFooter>
          <CornerCaret />
        </Group>
        <Group $w={322}>
          <GroupBody $pl={8}>
            <Big w={40} label="播放" icon={<IconPlay />} noCaret />
            <Big w={40} label="停止" icon={<IconStop />} dim noCaret />
            <ToolCol $ml={4} $w={20} $mt={-3}>
              <SmallTool $center><IconRewind /></SmallTool>
              <SmallTool $center><IconPause /></SmallTool>
              <SmallTool $center><IconClocks /></SmallTool>
            </ToolCol>
            <ToolCol $ml={5} $w={20} $mt={-3}>
              <SmallTool $center><IconStep /></SmallTool>
              <SmallTool $center><IconSnap /></SmallTool>
              <SmallTool $center><IconSaveCam /></SmallTool>
            </ToolCol>
            <ToolCol $ml={5} $w={28}>
              <TallTool $center><IconSearch /></TallTool>
              <TallTool $center><IconCamBoxes /></TallTool>
            </ToolCol>
            <ToolCol $ml={5} $w={20} $mt={-3}>
              <SmallTool $center><IconCircleDot /></SmallTool>
              <SmallTool $center><IconCircleBox /></SmallTool>
              <SmallTool $center><IconCirclePlay /></SmallTool>
            </ToolCol>
            <ToolCol $ml={7} $w={52}>
              <TallTool><IconMonitor /><ToolText>监视</ToolText></TallTool>
              <TallTool><IconGraph /><ToolText>图</ToolText></TallTool>
            </ToolCol>
            <ToolCol $ml={7}>
              <TallTool><IconEnvelope /><ToolText>包络</ToolText></TallTool>
              <TallTool><IconInterfere /><ToolText>干涉</ToolText></TallTool>
            </ToolCol>
          </GroupBody>
          <GroupFooter>仿真</GroupFooter>
          <CornerCaret />
        </Group>
        <Group $w={257}>
          <GroupBody $pl={12}>{ribbonGroup4.map(b => <Big key={b.label} {...b} />)}</GroupBody>
          <GroupFooter>机械</GroupFooter>
          <CornerCaret />
        </Group>
        <Group $w={173}>
          <GroupBody $pl={10}>{ribbonGroup5.map(b => <Big key={b.label} {...b} />)}</GroupBody>
          <GroupFooter>电气</GroupFooter>
          <CornerCaret />
        </Group>
        <Group $w={223}>
          <GroupBody $pl={8}>{ribbonGroup6.map(b => <Big key={b.label} {...b} />)}</GroupBody>
          <GroupFooter>自动化</GroupFooter>
          <CornerCaret />
        </Group>
        <Group $w={272} $last>
          <GroupBody $pl={8}>{ribbonGroup7.map(b => <Big key={b.label} {...b} />)}</GroupBody>
          <GroupFooter $pr={0}>设计协同</GroupFooter>
        </Group>
      </Ribbon>

      <SelectionBar>
        <Ic w={11} h={10}><path d="M0 1h11M0 5h11M0 9h11" stroke="#333" /></Ic>
        <MenuLabel>菜单(<u>M</u>)</MenuLabel>
        <Caret $ml={4} />
        <SelSep $ml={8} />
        <Dropdown $w={149} $ml={15}>无选择过滤器<Caret /></Dropdown>
        <SelSlot $ml={9}><SelFilter /></SelSlot>
        <Dropdown $w={156} $ml={9}>整个装配<Caret /></Dropdown>
        <SelSlot $ml={9}><SelAsm /></SelSlot>
        <Caret $ml={3} />
        <SelSlot $ml={12}><SelTarget /></SelSlot>
        <SelSlot $ml={7}><SelPoint /></SelSlot>
        <SelSlot $ml={9}><SelCubeT /></SelSlot>
        <SelSlot $ml={6}><SelSquareT /></SelSlot>
        <Caret $ml={8} />
        <SelSlot $ml={10}><SelBoxLine /></SelSlot>
        <SelSlot $ml={8}><SelBoxFrame /></SelSlot>
        <SelSep $ml={11} />
      </SelectionBar>

      <Main>
        <Rail>
          <RailItem $mt={0}><RailGear /></RailItem>
          <RailItem $mt={24}><RailCubes /></RailItem>
          <RailItem $mt={18}><RailTree /></RailItem>
          <RailItem $mt={14}><RailCompass /></RailItem>
          <RailItem $mt={16}><RailCompare>P1=<br />P2=</RailCompare></RailItem>
          <RailItem $mt={15}><RailFaces /></RailItem>
          <RailItem $mt={16}><RailValve /></RailItem>
          <RailItem $mt={16}><RailBracket /></RailItem>
          <RailItem $mt={17}><RailBooks /></RailItem>
          <RailItem $mt={16}><RailBracketDim /></RailItem>
          <RailItem $mt={16}><RailPartDim /></RailItem>
          <RailActive $mt={7}><RailClockPie /></RailActive>
          <RailItem $mt={20}><RailInfo /></RailItem>
          <RailItem $mt={26}><RailWeb /></RailItem>
          <RailItem $mt={27}><RailClock /></RailItem>
        </Rail>

        <Panel>
          <PanelHead>序列编辑器<MaxBtn /></PanelHead>
          <PanelBox>
            <SeqTools>
              <SeqTool><SeqClock /></SeqTool>
              <SeqTool><SeqCurve /></SeqTool>
            </SeqTools>
            <Sheet>
              <Table>
                <HeadRow>
                  <HeadCell />
                  <HeadCell $pl={4}>启.</HeadCell>
                  <HeadCell $bold $pl={4}>名称</HeadCell>
                  <HeadCell>开始时</HeadCell>
                  <HeadCell $pl={4}>持</HeadCell>
                </HeadRow>
                {rows.map(i => (
                  <Row key={i} $odd={i % 2 === 1}>
                    <NumCell $bold={i === 1}>{i < 2 ? i + 1 : ''}</NumCell>
                    <Cell>{i < 2 && <CheckBox><CheckMark /></CheckBox>}</Cell>
                    <Cell $sel={i === 1}>
                      {i === 0 && <><TreeIndent $ml={3}><Chevron /></TreeIndent><TreeIndent $ml={5}><TreeRoot /></TreeIndent><TreeLabel>根</TreeLabel></>}
                      {i === 1 && <><TreeIndent $ml={21}><TreeLine /></TreeIndent><TreeClock /><TreeLabel $mono>Oper</TreeLabel></>}
                    </Cell>
                    <Cell $end>{i === 0 ? '0' : ''}</Cell>
                    <Cell $end>{i === 0 ? '1.' : ''}</Cell>
                  </Row>
                ))}
              </Table>
              <Timeline>
                <Ruler><RulerDrawing /></Ruler>
                <Lane $h={18} $pt={1}><Bar /></Lane>
                <Lane $h={22} $odd><Stripe /><Bar $blue /></Lane>
                {rows.slice(2).map(i => <Lane key={i} $odd={i % 2 === 1} />)}
              </Timeline>
              <SideButtons>
                <SideButton><MPlus /></SideButton>
                <SideButton><Ic><path d="M1 8.5h15" stroke="#333" /></Ic></SideButton>
                <SideButton><SideFit /></SideButton>
              </SideButtons>
            </Sheet>
          </PanelBox>
        </Panel>

        <Viewport>
          <DocTabs>
            <DocTab><Tab2Gear /><DocName>_model1.prt</DocName><TabPop /><Ic w={5} h={5} /><TabClose /></DocTab>
          </DocTabs>
          <ModelWrap><Model /></ModelWrap>
          <TriadZ>Z</TriadZ>
        </Viewport>
      </Main>

      <ContextMenu>
        <MenuItem><MenuIcon><MPlus /></MenuIcon>添加仿真序列</MenuItem>
        <MenuItem><MenuIcon><MGroup /></MenuIcon>创建组</MenuItem>
        <MenuSep />
        <MenuItem $strong><MenuIcon><MWrench /></MenuIcon>编辑</MenuItem>
        <MenuItem><MenuIcon><MCross /></MenuIcon>删除</MenuItem>
        <MenuSep />
        <MenuItem><MenuIcon><MCopy /></MenuIcon>复制</MenuItem>
        <MenuSep />
        <MenuItem><MenuIcon><MRun /></MenuIcon>运行至该仿真序列</MenuItem>
      </ContextMenu>

      <ArrowMark width="76" height="60" viewBox="100 375 76 60">
        <polygon points="169,382 144,386 150,392 107,427 152,398 157,403" fill="#f5403f" />
      </ArrowMark>
    </Page>
  );
}

export default App;
